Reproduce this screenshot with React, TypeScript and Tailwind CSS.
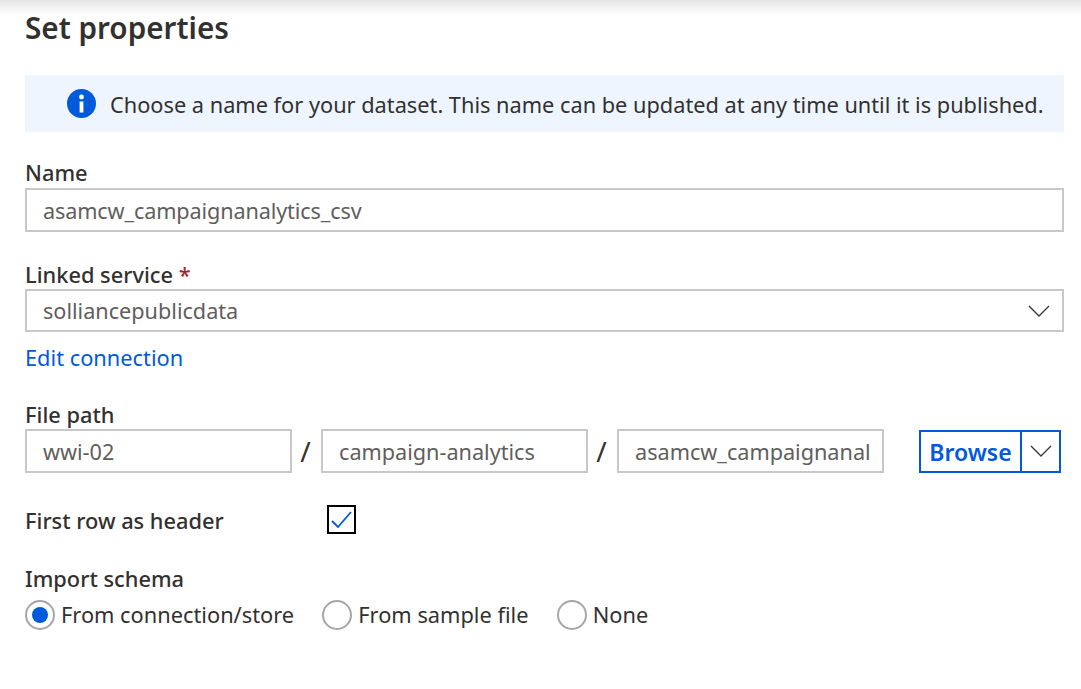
const labelCls = "text-[21.8px] leading-[28px] font-medium text-[#323130]";
const inputCls =
  "flex items-center border-2 border-[#c8c8c8] bg-white px-[16px] pt-[2px] text-[21.65px] text-[#605e5c]";

function Radio({ label, checked }: { label: string; checked?: boolean }) {
  return (
    <div className="flex items-center gap-[6px]">
      <span className="flex h-[30px] w-[30px] items-center justify-center rounded-full border-2 border-[#a6a6a6]">
        {checked && <span className="h-[16px] w-[16px] rounded-full bg-[#005ada]" />}
      </span>
      <span className="text-[21.8px] leading-[30px] text-[#323130]">{label}</span>
    </div>
  );
}

function Chevron() {
  return (
    <svg width="22" height="12" viewBox="0 0 22 12" fill="none" stroke="#3a3a3a" strokeWidth="1.4">
      <path d="M1 1l10 10L21 1" />
    </svg>
  );
}

export default function App() {
  return (
    <div
      className="relative h-[689px] w-[1081px] overflow-hidden bg-white"
      style={{ fontFamily: '"Noto Sans", sans-serif' }}
    >
      <div className="absolute inset-x-0 top-0 h-[15px] bg-gradient-to-b from-[#e4e4e4] to-white" />
      <div className="relative flex flex-col pl-[25px] pr-[17px]">
        <h1 className="mt-[9px] text-[29.7px] leading-[38px] font-semibold text-[#323130]">Set properties</h1>

        <div className="mt-[28px] flex h-[57px] items-center gap-[14px] bg-[#eef5fe] pl-[42px]">
          <svg width="29" height="29" viewBox="0 0 29 29">
            <circle cx="14.5" cy="14.5" r="14.5" fill="#005ada" />
            <circle cx="14.5" cy="8" r="2.4" fill="#fff" />
            <rect x="12.6" y="12.5" width="3.8" height="11" fill="#fff" />
          </svg>
          <p className="pt-[3px] text-[21.75px] text-[#323130] whitespace-nowrap">
            Choose a name for your dataset. This name can be updated at any time until it is published.
          </p>
        </div>

        <label className={`mt-[27px] ${labelCls}`}>Name</label>
        <div className={`mt-[1px] h-[44px] ${inputCls} tracking-[-0.13px]`}>asamcw_campaignanalytics_csv</div>

        <label className={`mt-[29px] ${labelCls}`}>
          Linked service <span className="text-[#a4262c]">*</span>
        </label>
        <div className={`h-[43px] justify-between ${inputCls}`}>
          <span>solliancepublicdata</span>
          <span className="mr-[-4px] mb-[2px]"><Chevron /></span>
        </div>
        <a className="mt-[11px] text-[21.8px] leading-[30px] text-[#005ada]">Edit connection</a>

        <label className={`mt-[28px] ${labelCls}`}>File path</label>
        <div className="flex items-center">
          <div className={`h-[44px] w-[267px] ${inputCls}`}>wwi-02</div>
          <span className="w-[29px] pr-[2px] text-center text-[28px] text-[#323130]">/</span>
          <div className={`h-[44px] w-[267px] ${inputCls}`}>campaign-analytics</div>
          <span className="w-[29px] pr-[2px] text-center text-[28px] text-[#323130]">/</span>
          <div className={`h-[44px] w-[267px] overflow-hidden whitespace-nowrap ${inputCls}`}>asamcw_campaignanal</div>
          <div className="ml-[35px] flex h-[43px] w-[142px] items-center border-2 border-[#005ada]">
            <span className="flex h-full w-[101px] items-center justify-center border-r-2 border-[#005ada] pt-[2px] text-[23px] font-semibold text-[#005ada]">
              Browse
            </span>
            <span className="flex flex-1 items-center justify-center"><Chevron /></span>
          </div>
        </div>

        <div className="mt-[32px] flex items-start">
          <span className={`w-[302px] pt-[2px] ${labelCls}`}>First row as header</span>
          <span className="flex h-[29px] w-[29px] items-center justify-center border-[2.5px] border-black">
            <svg width="21" height="17" viewBox="0 0 21 17" fill="none" stroke="#005ada" strokeWidth="1.8">
              <path d="M1 10l6 6L20 1" />
            </svg>
          </span>
        </div>

        <label className={`mt-[30px] ${labelCls}`}>Import schema</label>
        <div className="mt-[7px] flex items-center gap-[28.2px]">
          <Radio label="From connection/store" checked />
          <Radio label="From sample file" />
          <Radio label="None" />
        </div>
      </div>
    </div>
  );
}
